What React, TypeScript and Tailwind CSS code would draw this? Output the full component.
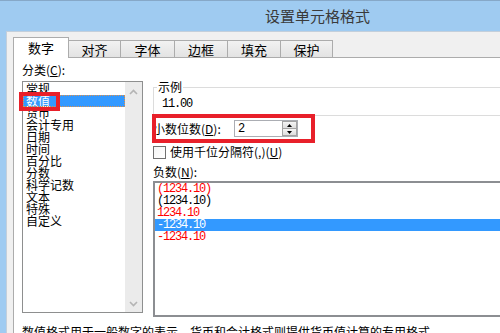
import React from "react";

const categories = ["常规", "数值", "货币", "会计专用", "日期", "时间", "百分比", "分数", "科学记数", "文本", "特殊", "自定义"];

const negatives = [
  { text: "(1234.10)", red: true },
  { text: "(1234.10)", red: false },
  { text: "1234.10", red: true },
  { text: "-1234.10", red: false, selected: true },
  { text: "-1234.10", red: true },
];

const tabs = [
  { label: "对齐", w: "w-[53px]" },
  { label: "字体", w: "w-[55px]" },
  { label: "边框", w: "w-[54px]" },
  { label: "填充", w: "w-[54px]" },
  { label: "保护", w: "w-[53px]" },
];

const mono = "font-['Liberation_Mono',monospace] tracking-[-1.2px]";

function Chevron({ up }: { up?: boolean }) {
  return (
    <svg width="9" height="6" viewBox="0 0 9 6">
      <polyline
        points={up ? "1,5 4.5,1.5 8,5" : "1,1 4.5,4.5 8,1"}
        fill="none"
        stroke="#b4b4b4"
        strokeWidth="1.6"
      />
    </svg>
  );
}

export default function App() {
  return (
    <div className="relative w-[500px] h-[333px] overflow-hidden bg-[#9fcbf1] font-['Noto_Sans_CJK_SC','Noto_Sans',sans-serif] text-black">
      {/* title bar */}
      <div className="h-[31px] border-t border-[#86a8c8] flex items-center pl-[265px] text-[15px] text-[#3a3a3a]">
        设置单元格格式
      </div>

      <div className="flex h-[302px]">
        <div className="w-[6px] shrink-0" />
        <div className="w-[600px] shrink-0 bg-[#f0f0f0] border-l border-t border-[#c3cfdb] pl-[6px] pt-[5px] flex flex-col">
          {/* tabs */}
          <div className="flex items-end h-[20px] relative z-10">
            <div className="w-[56px] h-[21px] -mb-px bg-white border border-b-0 border-[#acacac] flex items-center justify-center text-[13px]">
              数字
            </div>
            {tabs.map((t) => (
              <div
                key={t.label}
                className={`${t.w} h-[17px] -ml-px bg-gradient-to-b from-[#f2f2f2] to-[#e3e3e3] border border-b-0 border-[#acacac] flex items-center justify-center pt-[2px] text-[13px]`}
              >
                {t.label}
              </div>
            ))}
          </div>

          {/* panel */}
          <div className="flex-1 bg-white border border-[#acacac] pl-[8px]">
            <div className="flex">
              {/* category column */}
              <div className="w-[121px] shrink-0 pt-[4px]">
                <div className="text-[12px] leading-[16px]">
                  分类(<span className="underline">C</span>):
                </div>
                <div className="mt-[3px] h-[232px] border border-[#8e8f8f] flex">
                  <div className="flex-1 pt-[1px] text-[12px] leading-[12px]">
                    {categories.map((c, i) => (
                      <div
                        key={c}
                        className={
                          i === 1
                            ? "h-[12px] pl-[3px] bg-[#3399ff] text-white outline-1 outline-dotted outline-[#e0914a] -outline-offset-1"
                            : "h-[12px] pl-[3px]"
                        }
                      >
                        {c}
                      </div>
                    ))}
                  </div>
                  <div className="w-[17px] bg-[#ebebeb] flex flex-col items-center justify-between pt-[7px] pb-[5px]">
                    <Chevron up />
                    <Chevron />
                  </div>
                </div>
              </div>

              {/* options column */}
              <div className="ml-[10px] w-[420px] shrink-0 pt-[22px]">
                <fieldset className="m-0 border border-[#dcdcdc] pl-[3px] pb-[4px]">
                  <legend className="ml-0 px-[1px] text-[12px] leading-[14px]">示例</legend>
                  <div className={`pt-[3px] pl-[5px] text-[12px] leading-[14px] ${mono}`}>11.00</div>
                </fieldset>

                <div className="mt-[4px] h-[17px] flex items-center">
                  <div className="w-[81px] text-[12px] leading-[14px]">
                    小数位数(<span className="underline">D</span>):
                  </div>
                  <div className="w-[64px] h-[17px] border border-[#abadb3] flex items-center justify-between">
                    <span className={`pl-[3px] text-[12px] ${mono}`}>2</span>
                    <div className="w-[15px] h-[15px] flex flex-col">
                      <div className="flex-1 border border-[#a3a3a3] bg-gradient-to-b from-[#f5f5f5] to-[#dedede] flex items-center justify-center">
                        <svg width="5" height="3" viewBox="0 0 5 3">
                          <polygon points="0,3 2.5,0 5,3" fill="#000" />
                        </svg>
                      </div>
                      <div className="flex-1 border border-t-0 border-[#a3a3a3] bg-gradient-to-b from-[#f5f5f5] to-[#dedede] flex items-center justify-center">
                        <svg width="5" height="3" viewBox="0 0 5 3">
                          <polygon points="0,0 5,0 2.5,3" fill="#000" />
                        </svg>
                      </div>
                    </div>
                  </div>
                </div>

                <div className="mt-[8px] flex items-center">
                  <div className="w-[13px] h-[13px] border border-[#707070] bg-gradient-to-br from-[#f4f4f4] to-white" />
                  <div className="ml-[4px] text-[12px] leading-[14px]">
                    使用千位分隔符(,)(<span className="underline">U</span>)
                  </div>
                </div>

                <div className="mt-[6px] text-[12px] leading-[14px]">
                  负数(<span className="underline">N</span>):
                </div>
                <div className="mt-[2px] h-[136px] border-2 border-[#8c8e92]">
                  {negatives.map((n, i) => (
                    <div
                      key={i}
                      className={`h-[12px] pl-[2px] text-[12px] leading-[12px] ${mono} ${
                        n.selected ? "bg-[#3399ff] text-white" : n.red ? "text-[#ff0000]" : "text-black"
                      }`}
                    >
                      {n.text}
                    </div>
                  ))}
                </div>
              </div>
            </div>

            <div className="mt-[7px] text-[12px] leading-[16px] whitespace-nowrap">
              数值格式用于一般数字的表示。货币和会计格式则提供货币值计算的专用格式。
            </div>
          </div>
        </div>
      </div>

      {/* highlight marks */}
      <div className="absolute left-[19px] top-[92px] w-[41px] h-[19px] border-[4px] border-[#e8202a]" />
      <div className="absolute left-[152px] top-[114px] w-[163px] h-[29px] border-[4px] border-[#e8202a]" />
    </div>
  );
}
